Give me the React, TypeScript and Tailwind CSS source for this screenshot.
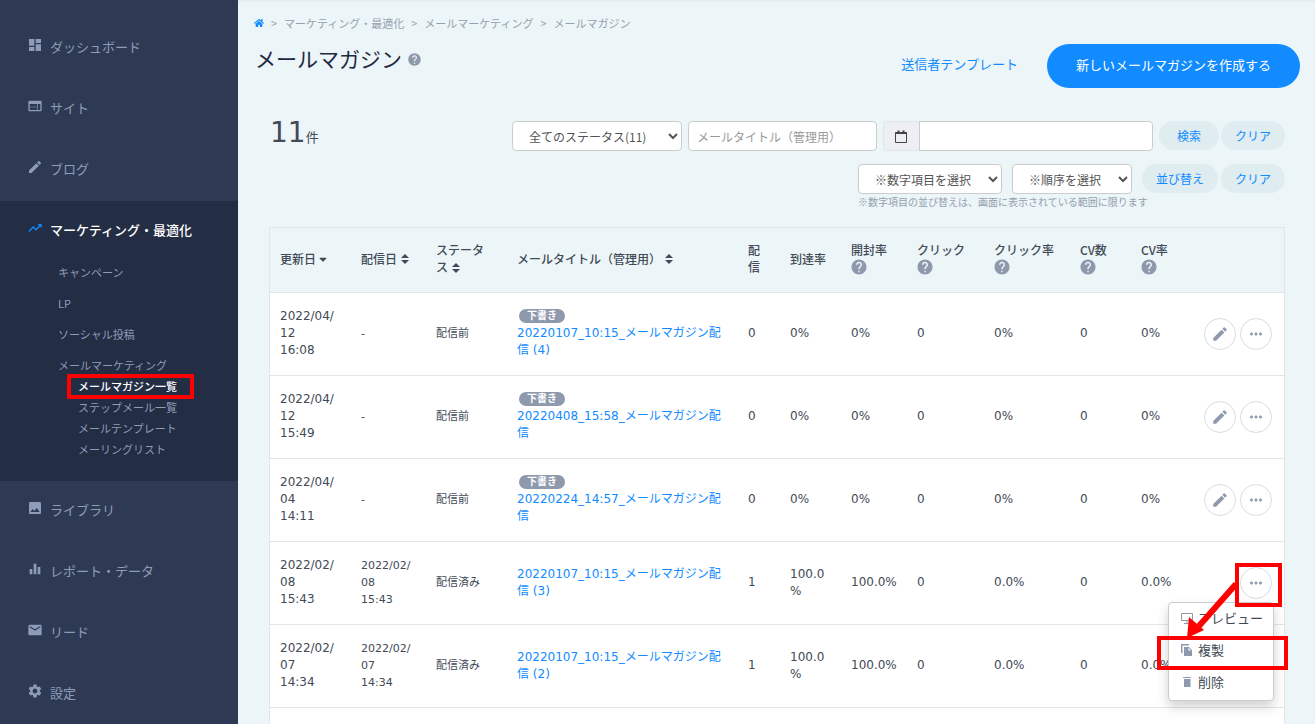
import { useState } from 'react'
import type { ReactNode } from 'react'
import type { IconType } from 'react-icons'
import {
  MdDashboard,
  MdWeb,
  MdEdit,
  MdTrendingUp,
  MdImage,
  MdEqualizer,
  MdEmail,
  MdSettings,
  MdHelp,
  MdMoreHoriz,
} from 'react-icons/md'
import { FaHome, FaSortDown } from 'react-icons/fa'

interface NavItem {
  label: string
  icon: IconType
}

interface Mail {
  updatedAt: string
  sentAt: string | null
  title: string
  draft: boolean
  sent: string
  reach: string
  open: string
  click: string
  clickRate: string
  cv: string
  cvRate: string
}

const navTop: NavItem[] = [
  { label: 'ダッシュボード', icon: MdDashboard },
  { label: 'サイト', icon: MdWeb },
  { label: 'ブログ', icon: MdEdit },
]

const navBottom: NavItem[] = [
  { label: 'ライブラリ', icon: MdImage },
  { label: 'レポート・データ', icon: MdEqualizer },
  { label: 'リード', icon: MdEmail },
  { label: '設定', icon: MdSettings },
]

const draftStats = { sentAt: null, draft: true, sent: '0', reach: '0%', open: '0%', click: '0', clickRate: '0%', cv: '0', cvRate: '0%' }
const sentStats = { draft: false, sent: '1', reach: '100.0%', open: '100.0%', click: '0', clickRate: '0.0%', cv: '0', cvRate: '0.0%' }

const mails: Mail[] = [
  { ...draftStats, updatedAt: '2022/04/\n12\n16:08', title: '20220107_10:15_メールマガジン配信 (4)' },
  { ...draftStats, updatedAt: '2022/04/\n12\n15:49', title: '20220408_15:58_メールマガジン配信' },
  { ...draftStats, updatedAt: '2022/04/\n04\n14:11', title: '20220224_14:57_メールマガジン配信' },
  { ...sentStats, updatedAt: '2022/02/\n08\n15:43', sentAt: '2022/02/\n08\n15:43', title: '20220107_10:15_メールマガジン配信 (3)' },
  { ...sentStats, updatedAt: '2022/02/\n07\n14:34', sentAt: '2022/02/\n07\n14:34', title: '20220107_10:15_メールマガジン配信 (2)' },
]

function NavLink({ item }: { item: NavItem }) {
  const Icon = item.icon
  return (
    <a href="#" className="flex items-start gap-[7px] pt-[18px] pb-[21px] pl-[27px] text-[13px] leading-[22px] hover:text-white">
      <Icon className="w-4 h-4 mt-px" />
      {item.label}
    </a>
  )
}

function SubLink({ children }: { children: ReactNode }) {
  return (
    <a href="#" className="block py-[5px] hover:text-white">
      {children}
    </a>
  )
}

function Sidebar() {
  return (
    <nav className="w-[238px] shrink-0 bg-[#2e3a54] pt-[18px] text-[#8f9cb9]">
      {navTop.map((item) => (
        <NavLink key={item.label} item={item} />
      ))}

      <div className="bg-[#232d44] pb-[21px]">
        <a href="#" className="flex items-start gap-[7px] pt-[18px] pb-4 pl-[27px] text-[13px] leading-[22px] font-medium text-white">
          <MdTrendingUp className="w-4 h-4 mt-px text-[#118bff]" />
          マーケティング・最適化
        </a>
        <ul className="pl-[58px] text-[11px] leading-[21px]">
          <li><SubLink>キャンペーン</SubLink></li>
          <li><SubLink>LP</SubLink></li>
          <li><SubLink>ソーシャル投稿</SubLink></li>
          <li>
            <a href="#" className="block pt-[5px] hover:text-white">メールマーケティング</a>
            <ul className="pl-5">
              <li className="relative w-fit">
                <a href="#" className="block font-medium text-white">メールマガジン一覧</a>
                <span className="absolute -top-[2px] -bottom-[2px] -left-[11px] -right-[17px] border-4 border-[#ff0000] pointer-events-none" />
              </li>
              <li><a href="#" className="block hover:text-white">ステップメール一覧</a></li>
              <li><a href="#" className="block hover:text-white">メールテンプレート</a></li>
              <li><a href="#" className="block hover:text-white">メーリングリスト</a></li>
            </ul>
          </li>
        </ul>
      </div>

      <div className="-mb-2">
        {navBottom.map((item) => (
          <NavLink key={item.label} item={item} />
        ))}
      </div>
    </nav>
  )
}

function SortIcon() {
  return (
    <svg viewBox="0 0 8 10" className="inline-block w-2 h-[10px] ml-1 -mt-[2px]" fill="currentColor">
      <path d="M4 0L8 4H0zM4 10L0 6H8z" />
    </svg>
  )
}

function CalendarIcon() {
  return (
    <svg viewBox="0 0 12 13" className="w-3 h-[13px]" fill="none" stroke="currentColor">
      <path d="M0.5 2.5h11v10h-11z" />
      <path d="M0.5 3h11" strokeWidth="2" />
      <path d="M3.5 0.5v3M8.5 0.5v3" strokeWidth="2" />
    </svg>
  )
}

function PreviewIcon() {
  return (
    <svg viewBox="0 0 14 14" className="w-[14px] h-[14px] text-[#8e99ad]" fill="none" stroke="currentColor">
      <path d="M1.5 2.5h11v7h-11z" />
      <path d="M7 9.5v3M4 12.5h6" />
    </svg>
  )
}

function CopyIcon() {
  return (
    <svg viewBox="0 0 14 14" className="w-[14px] h-[14px] text-[#8e99ad]" fill="currentColor">
      <path d="M1 1h8v1.5H2.5V10H1z" />
      <path d="M4 4h5l3 3v6H4zM8.5 4.8v2.7h2.7z" fillRule="evenodd" />
    </svg>
  )
}

function TrashIcon() {
  return (
    <svg viewBox="0 0 14 14" className="w-[14px] h-[14px] text-[#8e99ad]" fill="currentColor">
      <path d="M3 2h8v1H3zM4 4h6.5v8H4z" />
    </svg>
  )
}

function HelpHeader({ label }: { label: string }) {
  return (
    <>
      {label}
      <button type="button" aria-label={`${label}のヘルプ`} className="block -ml-px text-[#8e99ad]">
        <MdHelp className="w-[18px] h-[18px]" />
      </button>
    </>
  )
}

function PillButton({ children }: { children: ReactNode }) {
  return (
    <button type="button" className="h-[29px] px-[14px] rounded-full bg-[#dfecf0] text-[12px] text-[#118bff] hover:bg-[#d2e4ea]">
      {children}
    </button>
  )
}

function MenuItem({ icon, children }: { icon: ReactNode; children: ReactNode }) {
  return (
    <li>
      <button type="button" className="flex items-center gap-1 w-full h-8 pb-[2px] pl-[11px] whitespace-nowrap">
        {icon}
        {children}
      </button>
    </li>
  )
}

function RowMenu() {
  return (
    <ul className="absolute -right-[2px] top-full mt-[3px] w-[106px] pb-px bg-white border border-[#cccccc] rounded shadow-[0_6px_12px_rgba(0,0,0,0.18)] text-[13px] text-[#414a56] z-10">
      <MenuItem icon={<PreviewIcon />}>プレビュー</MenuItem>
      <MenuItem icon={<CopyIcon />}>複製</MenuItem>
      <MenuItem icon={<TrashIcon />}>削除</MenuItem>
    </ul>
  )
}

// red guide: from the "..." button to the copy action
function CopyGuide() {
  return (
    <svg viewBox="0 0 131 107" className="absolute -top-1 -left-[83px] w-[131px] h-[107px] max-w-none pointer-events-none z-20">
      <rect x="80" y="2" width="43" height="40" fill="none" stroke="#ff0000" strokeWidth="4" />
      <rect x="2" y="75" width="127" height="30" fill="none" stroke="#ff0000" strokeWidth="4" />
      <path d="M79 21L42 63" stroke="#ff0000" strokeWidth="6" />
      <path d="M30 75L32 54L47 67z" fill="#ff0000" />
    </svg>
  )
}

export default function App() {
  const [status, setStatus] = useState('all')
  const [keyword, setKeyword] = useState('')
  const [period, setPeriod] = useState('')
  const [openRow, setOpenRow] = useState<number | null>(3)

  return (
    <div className="flex min-h-screen bg-[#ecf5f7] font-['Noto_Sans_CJK_JP',sans-serif] text-[#414a56]">
      <Sidebar />

      <main className="flex flex-col flex-1 min-w-0 pl-4 shadow-[inset_0_2px_2px_rgba(0,0,0,0.04)]">
        <ol className="flex items-center gap-[7px] pt-[14px] text-[11px] leading-[18px] text-[#95a0af]">
          <li>
            <a href="#" aria-label="ホーム" className="block text-[#118bff]">
              <FaHome className="w-[10px] h-[10px]" />
            </a>
          </li>
          <li>&gt;</li>
          <li>マーケティング・最適化</li>
          <li>&gt;</li>
          <li>メールマーケティング</li>
          <li>&gt;</li>
          <li>メールマガジン</li>
        </ol>

        <header className="flex items-start justify-between pt-3 pr-[15px]">
          <div className="flex items-center gap-[5px] pl-px">
            <h1 className="text-[21px] leading-[30px] pb-[2px] -mt-px text-[#1f2a44]">メールマガジン</h1>
            <button type="button" aria-label="ヘルプ" className="text-[#8e99ad]">
              <MdHelp className="w-[15px] h-[15px]" />
            </button>
          </div>
          <div className="flex items-center gap-[29px] text-[13px]">
            <a href="#" className="text-[#118bff] pb-1">送信者テンプレート</a>
            <button type="button" className="h-11 px-[29px] pb-[2px] rounded-full bg-[#118bff] text-white hover:bg-[#0078f0]">
              新しいメールマガジンを作成する
            </button>
          </div>
        </header>

        <div className="flex justify-between pt-[33px] pl-4 pr-[30px] text-[12px]">
          <p className="font-['DejaVu_Sans','Noto_Sans_CJK_JP',sans-serif] leading-6">
            <span className="text-[28px]">11</span>
            <span className="text-[13px]">件</span>
          </p>

          <div>
            <div className="flex items-start justify-end gap-[6px]">
              <select
                aria-label="ステータス"
                value={status}
                onChange={(e) => setStatus(e.target.value)}
                className="w-[170px] h-[30px] pl-3 bg-white border border-[#cccccc] rounded text-[#555555]"
              >
                <option value="all">全てのステータス(11)</option>
              </select>
              <input
                type="text"
                aria-label="メールタイトル"
                value={keyword}
                onChange={(e) => setKeyword(e.target.value)}
                placeholder="メールタイトル（管理用）"
                className="w-[189px] h-[30px] px-2 bg-white border border-[#cccccc] rounded placeholder-[#999999]"
              />
              <div className="flex">
                <label htmlFor="period" aria-label="期間" className="flex items-center justify-center w-9 h-[30px] bg-[#eeeff2] border border-r-0 border-[#e2e6ea] rounded-l text-[#444444]">
                  <CalendarIcon />
                </label>
                <input
                  id="period"
                  type="text"
                  value={period}
                  onChange={(e) => setPeriod(e.target.value)}
                  className="w-[234px] h-[30px] px-2 bg-white border border-[#cccccc] rounded-r"
                />
              </div>
              <div className="flex gap-[2px]">
                <button type="button" className="h-[29px] px-[18px] rounded-full bg-[#dfecf0] text-[#118bff] hover:bg-[#d2e4ea]">
                  検索
                </button>
                <PillButton>クリア</PillButton>
              </div>
            </div>

            <div className="flex items-start justify-end gap-[10px] pt-[13px]">
              <div className="relative w-[144px]">
                <select aria-label="数字項目" className="w-full h-[30px] pl-3 bg-white border border-[#cccccc] rounded text-[#555555]">
                  <option>※数字項目を選択</option>
                </select>
                <p className="whitespace-nowrap text-[10px] leading-4 text-[#95a0af]">
                  ※数字項目の並び替えは、画面に表示されている範囲に限ります
                </p>
              </div>
              <select aria-label="順序" className="w-[120px] h-[30px] pl-3 bg-white border border-[#cccccc] rounded text-[#555555]">
                <option>※順序を選択</option>
              </select>
              <div className="flex gap-[3px]">
                <PillButton>並び替え</PillButton>
                <PillButton>クリア</PillButton>
              </div>
            </div>
          </div>
        </div>

        {/* メール一覧 */}
        <div className="flex-1 ml-[15px] mr-[30px] mt-[17px] bg-white border border-b-0 border-[#e2e6e8]">
          <table className="w-full table-fixed border-collapse text-[12px] leading-[17px] text-left">
            <colgroup>
              <col className="w-[81px]" />
              <col className="w-[75px]" />
              <col className="w-[81px]" />
              <col />
              <col className="w-[42px]" />
              <col className="w-[61px]" />
              <col className="w-[66px]" />
              <col className="w-[77px]" />
              <col className="w-[86px]" />
              <col className="w-[61px]" />
              <col className="w-[62px]" />
              <col className="w-[91px]" />
            </colgroup>
            <thead>
              <tr className="h-16 bg-[#ecf5f7] border-b border-[#e2e6e8] [&>th]:px-[10px] [&>th]:pb-[3px] [&>th]:font-medium [&>th]:whitespace-nowrap">
                <th>
                  更新日
                  <FaSortDown className="inline-block w-3 h-3 ml-px -mt-[6px]" />
                </th>
                <th>
                  配信日
                  <SortIcon />
                </th>
                <th>
                  ステータ
                  <br />
                  ス
                  <SortIcon />
                </th>
                <th>
                  メールタイトル（管理用）
                  <SortIcon />
                </th>
                <th>
                  配
                  <br />
                  信
                </th>
                <th>到達率</th>
                <th><HelpHeader label="開封率" /></th>
                <th><HelpHeader label="クリック" /></th>
                <th><HelpHeader label="クリック率" /></th>
                <th><HelpHeader label="CV数" /></th>
                <th><HelpHeader label="CV率" /></th>
                <th aria-label="操作" />
              </tr>
            </thead>
            <tbody className="font-['DejaVu_Sans','Noto_Sans_CJK_JP',sans-serif]">
              {mails.map((mail, i) => (
                <tr key={i} className="h-[83px] border-b border-[#e2e6e8] [&>td]:px-[10px] [&>td]:break-words">
                  <td className="whitespace-pre-line">{mail.updatedAt}</td>
                  <td className="whitespace-pre-line text-[11px]">{mail.sentAt ?? '-'}</td>
                  <td className="text-[11px]">{mail.draft ? '配信前' : '配信済み'}</td>
                  <td>
                    {mail.draft && (
                      <span className="block w-fit h-[14px] ml-[2px] mb-[2px] px-2 rounded-full bg-[#8e99ad] text-[10px] leading-[14px] font-bold text-white">
                        下書き
                      </span>
                    )}
                    <a href="#" className="text-[#118bff] hover:underline">{mail.title}</a>
                  </td>
                  <td>{mail.sent}</td>
                  <td>{mail.reach}</td>
                  <td>{mail.open}</td>
                  <td>{mail.click}</td>
                  <td>{mail.clickRate}</td>
                  <td>{mail.cv}</td>
                  <td>{mail.cvRate}</td>
                  <td>
                    <div className="flex justify-end gap-1 pr-[2px] font-['Noto_Sans_CJK_JP',sans-serif]">
                      {mail.draft && (
                        <button type="button" aria-label="編集" className="flex items-center justify-center w-8 h-8 border border-[#d8dce6] rounded-full text-[#8e99ad]">
                          <MdEdit className="w-[18px] h-[18px]" />
                        </button>
                      )}
                      <div className="relative">
                        <button
                          type="button"
                          aria-label="その他"
                          onClick={() => setOpenRow(openRow === i ? null : i)}
                          className="flex items-center justify-center w-8 h-8 bg-white border border-[#d8dce6] rounded-full text-[#8e99ad]"
                        >
                          <MdMoreHoriz className="w-[18px] h-[18px]" />
                        </button>
                        {openRow === i && <RowMenu />}
                        {openRow === i && <CopyGuide />}
                      </div>
                    </div>
                  </td>
                </tr>
              ))}
            </tbody>
          </table>
        </div>
      </main>
    </div>
  )
}
